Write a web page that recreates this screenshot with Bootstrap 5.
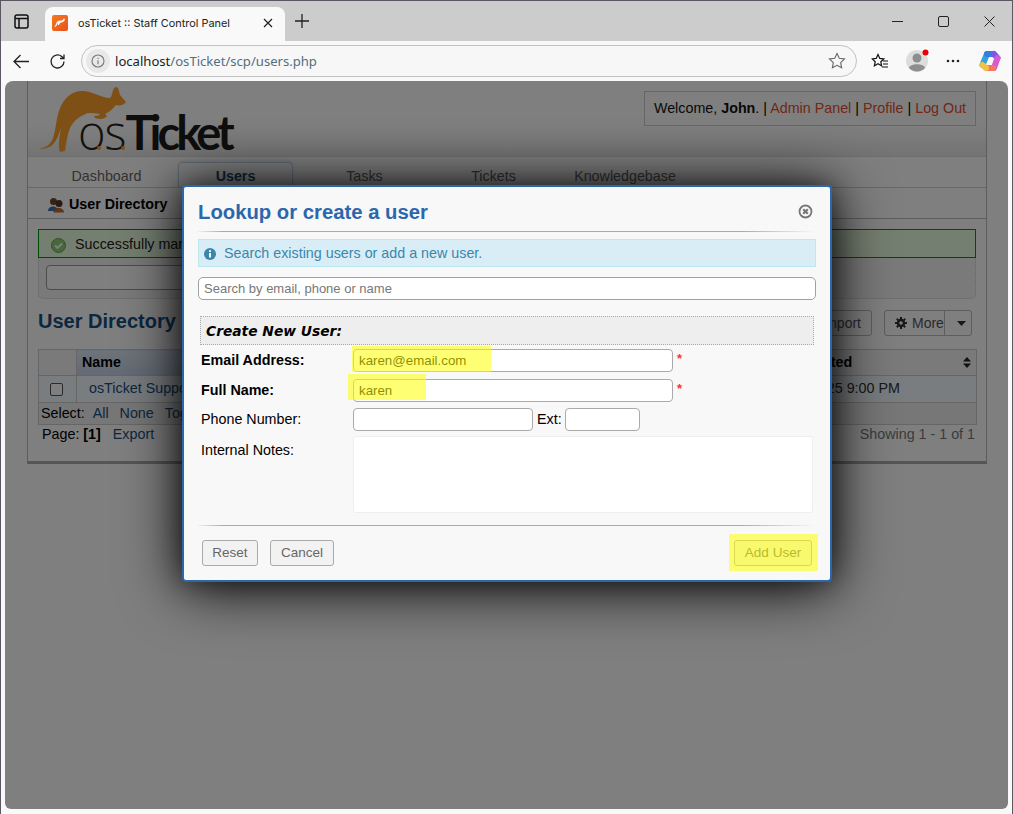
<!DOCTYPE html>
<html lang="en">
<head>
<meta charset="utf-8">
<title>osTicket :: Staff Control Panel</title>
<link href="https://cdn.jsdelivr.net/npm/bootstrap@5.3.0/dist/css/bootstrap.min.css" rel="stylesheet">
<script src="https://cdn.jsdelivr.net/npm/bootstrap@5.3.0/dist/js/bootstrap.bundle.min.js"></script>
<style>
html,body{height:814px;overflow:hidden;margin:0;background:#f9f9f9;font-family:"Liberation Sans",Arial,sans-serif;font-size:14.3px;color:#000}
.win{width:1013px;height:814px;border:1px solid #5d5560;border-width:1px 1px 0 1px;background:#f9f9f9;display:flex;flex-direction:column}
.tabstrip{height:40px;background:#ccc;flex:none;padding-left:44px;position:relative}
.brtab{width:240px;height:34px;margin-top:6px;background:#f9f9f9;border-radius:8px 8px 0 0;padding:0 12px 2px 7px;gap:10px;color:#222}
.favi{width:16px;height:16px;background:linear-gradient(135deg,#f47a20,#e9501c);border-radius:2px;flex:none}
.brtab .ttl{flex:1;white-space:nowrap;font-family:"Inter","Noto Sans",sans-serif;font-size:10.9px}
.sideic{position:absolute;left:13px;top:13px}
.plus{margin-left:3px;margin-top:6px}
.winbtns{position:absolute;right:0;top:0;height:40px;gap:0}
.winbtns span{width:46px;height:40px;display:flex;align-items:center;justify-content:center}
.toolbar{height:40px;flex:none;background:#f9f9f9;position:relative}
.addr{position:absolute;left:80px;top:4px;width:776px;height:32px;border:1px solid #c2c2c2;border-radius:16px;background:#f7f7f7;font-family:"Noto Sans",sans-serif;font-size:13.1px;color:#52707f;padding-left:4px;gap:5px}
.addr .utxt{padding-top:2px}
.addr b{font-weight:400;color:#1c1c1c}
.addrinfo{width:24px;height:24px;border-radius:50%;background:#e8e8e8;display:flex;align-items:center;justify-content:center;flex:none}
.tbic{position:absolute;top:0;height:40px;display:flex;align-items:center}
.viewport{width:1003px;height:728px;margin-left:4px;background:#fff;border-radius:8px 8px 6px 6px;overflow:hidden;position:relative;flex:none}
.sheet{width:960px;height:383px;margin-left:22px;border-left:1px solid #bbb;border-right:1px solid #bbb;border-bottom:3px solid #aaa;background:#fff}
.headarea{height:76px;background:linear-gradient(#fff 55%,#f8f8f8 72%,#e6e6e6 100%);border-bottom:1px solid #ddd;padding:0 10px}
.logobox{width:210px;height:76px;position:relative}
.roo{position:absolute;left:-1px;top:4px}
.logoword{position:absolute;left:40px;top:23px;line-height:56px;white-space:nowrap;font-family:"Lato","Open Sans",sans-serif;color:#222}
.logoword .lo{font-size:47px;font-weight:300;letter-spacing:-1px;font-family:"Open Sans",sans-serif}
.logoword .hi{font-size:47px;font-weight:700;letter-spacing:-3.9px;color:#1c1c1c}
.ldot{position:absolute;top:65px;width:4px;height:4px;border-radius:50%;background:#ffa02c}
.welc{height:35px;width:332px;margin-top:10px;border:1px solid #ccc;background:#fff;padding:0 8px;color:#111;white-space:nowrap;justify-content:center}
.welc a{color:#e2502f;text-decoration:none}
.welc i{font-style:normal;color:#000}
.navstrip{height:31px;padding-left:14px;border-bottom:1px solid #c0d5ea;background:#fff;align-items:flex-end}
.navit{width:129px;text-align:center;height:25px;line-height:28px;color:#666;flex:none}
.navit.last{width:134px}
.navit.on{width:115px;margin:0 7px;line-height:26px;font-weight:700;color:#184e81;background:#fff;border:1px solid #c0d5ea;border-bottom:0;border-radius:5px 5px 0 0;box-shadow:0 -1px 3px rgba(0,0,0,.1)}
.subnav{height:31px;border-bottom:1px solid #bbb;padding:4px 0 0 20px;font-weight:700;gap:5px;color:#000}
.content{padding:10px 10px 0 10px}
.okbar{height:29px;background:#eaffe2;border:1px solid #090;padding:3px 0 0 12px;gap:9px;color:#222;white-space:nowrap}
.searchwrap{height:41px;background:#f4f4f4;border:1px dotted #ccc;border-top:0;border-radius:0 0 5px 5px;padding:7px 7px}
.searchwrap input{width:300px;height:25px;border:1px solid #999;border-radius:4px;background:#fff;display:block}
.dirhead{height:50px;padding-top:11px}
.dirhead h2{margin:0;font:700 20px "Liberation Sans",sans-serif;color:#184e81}
.pbtn{height:26px;border:1px solid #bbb;border-radius:3px;background:#fff;color:#555;font-size:14px;display:flex;align-items:center;padding:0 10px;gap:5px}
.dirtools{margin-right:4px;gap:12px}
.morebtn{padding:0;width:88px}
.morebtn .lft{flex:1;display:flex;align-items:center;gap:5px;padding-left:10px;height:100%;border-right:1px solid #bbb}
.morebtn .rgt{width:23px;flex:none;display:flex;justify-content:center}
.ulist{width:939px;border-collapse:collapse;table-layout:fixed;margin:0}
.ulist th,.ulist td{border:1px solid #ccc;padding:0 5px;font-weight:400}
.ulist thead th{height:26px;background:#f4f4f4;font-weight:700;color:#000}
.ulist thead th.sorted{background:linear-gradient(#dfe7f4,#c7d6ec)}
.ulist tbody td{height:27px;background:#f4fafe;color:#333}
.ulist tbody td a{color:#184e81;text-decoration:none;margin-left:7px}
.ulist tfoot td{height:22px;background:#eee;padding:0 2px;color:#000}
.ulist tfoot a{color:#184e81;text-decoration:none;margin-left:4px;margin-right:3px}
.cbx{width:13px;height:13px;border:1px solid #555;border-radius:2px;background:#fff;display:block;margin:0 0 0 6px}
.pagerow{height:20px;padding:0 1px 0 4px;color:#000}
.pagerow a{color:#184e81;text-decoration:none;margin-left:12px}
.pagerow .shw{color:#777}
.dim{position:absolute;inset:0;background:rgba(0,0,0,.5)}
.dlg{position:absolute;left:177px;top:104px;width:650px;height:397px;background:#f8f8f8;border:2px solid #2a67ac;border-radius:4px;box-shadow:0 5px 60px #000,0 0 25px rgba(0,0,0,.4);padding:1px 15px 0 14px;color:#000}
.dlg h3{margin:0;font:700 20.3px/24px "Liberation Sans",sans-serif;color:#2a67ac}
.dlghead{height:43px;padding-top:12px;justify-content:space-between}
.xic{margin:4px 2px 0 0}
.rule{height:1px;background:linear-gradient(to right,rgba(170,170,170,.1),#aaa 4%,#aaa 88%,rgba(170,170,170,0))}
.infobar{height:28px;margin-top:7px;background:#d9edf7;border:1px solid #bce8f1;color:#3a87ad;padding:2px 0 0 5px;gap:8px;width:618px}
.lookup{width:618px;height:23px;margin-top:10px;border:1px solid #a0a0a0;border-radius:5px;background:#fff;padding:0 5px;font:13px "Liberation Sans",sans-serif;display:block}
.lookup::placeholder{color:#777;opacity:1}
.newhead{width:614px;height:29px;margin:16px 0 0 2px;background:#eee;border:1px dotted #aaa;padding-left:5px;font:italic 700 13.8px "DejaVu Sans",sans-serif;color:#000}
.frow{margin-left:3px;position:relative;display:flex;align-items:flex-start}
.frow label{width:152px;flex:none;margin:0;line-height:22px}
.fin{height:23px;border:1px solid #aaa;border-radius:4px;background:#fff;padding:0 5px;font:13.3px "Liberation Sans",sans-serif;color:#000;outline:0;display:block}
.fin.w3{width:320px}.fin.w1{width:180px}.fin.w0{width:75px}
.req{color:#f33;font-size:13px;margin-left:4px;line-height:20px;font-weight:700}
.extl{margin:0 3px 0 4px;line-height:22px}
.yel{position:absolute;background:rgba(255,255,0,.55);pointer-events:none}
.notes{width:460px;height:77px;border:1px solid #eee;border-radius:3px;background:#fff;display:block}
.dbtn{height:26px;border:1px solid #aaa;border-radius:3px;background:#f2f2f2;color:#666;font-size:13.5px;line-height:24px;display:inline-block;text-align:center}
.dbtn.b1{width:56px}.dbtn.b2{width:64px;margin-left:12px}.dbtn.b3{width:78px}
.dfoot{margin:14px 3px 0 4px;position:relative}
</style>
</head>
<body>
<div class="win">
  <div class="tabstrip d-flex align-items-start">
    <svg class="sideic" width="15" height="15" viewBox="0 0 15 15" fill="none" stroke="#111" stroke-width="1.5"><rect x="1" y="1" width="13" height="13" rx="2"/><path d="M1 4.500h13M5 4.500V14"/></svg>
    <div class="brtab d-flex align-items-center">
      <span class="favi d-flex align-items-center justify-content-center"><svg width="12" height="10" viewBox="0 0 12 10" fill="#fff"><path d="M0 9C2 8 2 4 4 3S8 3 9 2l1-2 1 2-2 2-3 1-1 2-1 0 0-2C3 6 3 9 0 9z"/></svg></span>
      <span class="ttl">osTicket :: Staff Control Panel</span>
      <svg width="10" height="10" viewBox="0 0 10 10" stroke="#222" stroke-width="1.2"><path d="M1 1l8 8M9 1l-8 8"/></svg>
    </div>
    <svg class="plus" width="28" height="28" viewBox="0 0 28 28" stroke="#222" stroke-width="1.3"><path d="M14 7v14M7 14h14"/></svg>
    <div class="winbtns d-flex">
      <span><svg width="11" height="11" viewBox="0 0 11 11" stroke="#222" stroke-width="1"><path d="M0 5.500h11"/></svg></span>
      <span><svg width="11" height="11" viewBox="0 0 11 11" fill="none" stroke="#222" stroke-width="1"><rect x=".5" y=".5" width="10" height="10" rx="1.500"/></svg></span>
      <span><svg width="11" height="11" viewBox="0 0 11 11" stroke="#222" stroke-width="1"><path d="M.5.5l10 10M10.500.5l-10 10"/></svg></span>
    </div>
  </div>
  <div class="toolbar">
    <span class="tbic" style="left:12px"><svg width="17" height="15" viewBox="0 0 17 15" fill="none" stroke="#222" stroke-width="1.3"><path d="M16 7.500H1M7.500 1L1 7.500 7.500 14"/></svg></span>
    <span class="tbic" style="left:48px"><svg width="17" height="17" viewBox="0 0 17 17" fill="none" stroke="#222" stroke-width="1.3"><path d="M15 8.500A6.500 6.500 0 1 1 12.700 3.500L15 5.500M15 1.500v4h-4"/></svg></span>
    <div class="addr d-flex align-items-center">
      <span class="addrinfo"><svg width="14" height="14" viewBox="0 0 14 14" fill="none" stroke="#777" stroke-width="1.100"><circle cx="7" cy="7" r="6"/><path d="M7 6.200v4M7 3.800v1.200"/></svg></span>
      <span class="utxt"><b>localhost</b>/osTicket/scp/users.php</span>
    </div>
    <span class="tbic" style="left:827px"><svg width="18" height="18" viewBox="0 0 18 18" fill="none" stroke="#666" stroke-width="1.100"><path d="M9 1.500l2.300 4.800 5.200.7-3.800 3.600.9 5.200L9 13.300l-4.600 2.500.9-5.200L1.500 7l5.200-.7z"/></svg></span>
    <span class="tbic" style="left:870px"><svg width="18" height="17" viewBox="0 0 18 17" fill="none" stroke="#111" stroke-width="1.200"><path d="M7 1.500l1.800 3.900 4 .5-3 2.800.8 4.200L7 10.800 3.400 12.900l.8-4.200-3-2.800 4-.5zM12 8h5M12 11h5M11 14h6"/></svg></span>
    <span class="tbic" style="left:904px"><svg width="24" height="24" viewBox="0 0 24 24"><circle cx="12" cy="12" r="11" fill="#ddd"/><circle cx="12" cy="9" r="4.500" fill="#8e8e8e"/><path d="M4 19c1-5 15-5 16 0a11 11 0 0 1-16 0z" fill="#8e8e8e"/><circle cx="20.500" cy="3.500" r="3" fill="#e60000"/></svg></span>
    <span class="tbic" style="left:945px"><svg width="14" height="4" viewBox="0 0 14 4" fill="#222"><circle cx="2" cy="2" r="1.300"/><circle cx="7" cy="2" r="1.300"/><circle cx="12" cy="2" r="1.300"/></svg></span>
    <span class="tbic" style="left:978px"><svg width="22" height="22" viewBox="0 0 22 22" fill="none" stroke-width="6" stroke-linecap="round"><path d="M8 4L3.500 15" stroke="#2ea6d8"/><path d="M8 4h6" stroke="#3a7be0"/><path d="M15 4L18.500 8" stroke="#7a58e8"/><path d="M18.500 8L15 18" stroke="#d85ad0"/><path d="M14 18H8" stroke="#f27a5a"/><path d="M3.500 15L7 18" stroke="#f2c14a"/></svg></span>
  </div>
  <div class="viewport">
    <div class="sheet">
      <div class="headarea d-flex justify-content-between">
        <div class="logobox">
          <svg class="roo" width="95" height="70" viewBox="37 85 95 70"><path fill="#ffa02c" d="M37 148C44 149 50 146 53 138 56 130 56 118 60 108 64 98 72 91 82 91 92 91 102 98 110 98 113 96 112 87 116 87 119 87 119 92 120 95L126 102C124 105 120 106 116 105 113 108 110 112 105 114L107 116C105 119 100 120 95 118L94 116C98 116 100 115 100 114 96 113 92 113 88 113 80 116 74 120 70 128 67 136 66 144 65 151L60 152C58 148 59 138 61 128 58 136 55 152 37 148Z"/></svg>
          <div class="logoword"><span class="lo">os</span><span class="hi">Ticket</span></div>
          <span class="ldot" style="left:59px"></span><span class="ldot" style="left:83px"></span>
        </div>
        <div class="welc d-flex align-items-center"><span>Welcome, <strong>John</strong>. <i>|</i> <a href="#">Admin Panel</a> <i>|</i> <a href="#">Profile</a> <i>|</i> <a href="#">Log Out</a></span></div>
      </div>
      <div class="navstrip d-flex">
        <div class="navit">Dashboard</div><div class="navit on">Users</div><div class="navit">Tasks</div><div class="navit">Tickets</div><div class="navit last">Knowledgebase</div>
      </div>
      <div class="subnav d-flex align-items-center">
        <svg width="16" height="16" viewBox="0 0 16 16"><circle cx="5.500" cy="4.500" r="3.500" fill="#6b4a2f"/><path d="M0 14c0-6 10-6 10 0z" fill="#3f6fb0"/><circle cx="11" cy="6.500" r="3.500" fill="#55382a"/><path d="M5.500 15.500c0-6 10.500-6 10.500 0z" fill="#c06a30"/></svg>
        <span>User Directory</span>
      </div>
      <div class="content">
        <div class="okbar d-flex align-items-center">
          <svg width="15" height="15" viewBox="0 0 15 15"><circle cx="7.500" cy="7.500" r="7" fill="#8ed07a" stroke="#5da84a"/><path d="M4 7.500l2.500 2.500L11 5.500" fill="none" stroke="#fff" stroke-width="1.800"/></svg>
          <span>Successfully marked user as verified</span>
        </div>
        <div class="searchwrap"><input type="text" aria-label="Search"></div>
        <div class="dirhead d-flex justify-content-between">
          <h2>User Directory</h2>
          <div class="dirtools d-flex">
            <div class="pbtn">Import</div>
            <div class="pbtn morebtn"><span class="lft"><svg width="12" height="12" viewBox="0 0 12 12" fill="none" stroke="#333"><circle cx="6" cy="6" r="3" stroke-width="2.500"/><path d="M6 0v2M6 10v2M0 6h2M10 6h2M1.800 1.800l1.400 1.400M8.800 8.800l1.400 1.400M1.800 10.200l1.400-1.400M8.800 3.200l1.400-1.400" stroke-width="2"/></svg>More</span><span class="rgt"><svg width="9" height="5" viewBox="0 0 9 5" fill="#333"><path d="M0 0h9L4.500 5z"/></svg></span></div>
          </div>
        </div>
        <table class="ulist">
          <colgroup><col style="width:38px"><col style="width:360px"><col style="width:150px"><col style="width:203px"><col></colgroup>
          <thead><tr><th></th><th class="sorted">Name</th><th>Status</th><th>Created</th><th><div class="d-flex justify-content-between align-items-center"><span>Updated</span><svg width="8" height="11" viewBox="0 0 8 11" fill="#222"><path d="M4 0l4 4.500H0zM4 11L0 6.500h8z"/></svg></div></th></tr></thead>
          <tbody><tr><td><span class="cbx"></span></td><td><a href="#">osTicket Support</a></td><td>Active</td><td>3/25/25 9:00 PM</td><td>3/25/25 9:00 PM</td></tr></tbody>
          <tfoot><tr><td colspan="5">Select: <a href="#">All</a> <a href="#">None</a> <a href="#">Toggle</a></td></tr></tfoot>
        </table>
        <div class="pagerow d-flex justify-content-between align-items-end">
          <span>Page: <strong>[1]</strong><a href="#">Export</a></span>
          <span class="shw">Showing 1 - 1 of 1</span>
        </div>
      </div>
    </div>
    <div class="dim"></div>
    <div class="dlg">
      <div class="dlghead d-flex align-items-start">
        <h3>Lookup or create a user</h3>
        <svg class="xic" width="15" height="15" viewBox="0 0 15 15"><circle cx="7.500" cy="7.500" r="6" fill="none" stroke="#777" stroke-width="1.800"/><path d="M5.200 5.200l4.600 4.600M9.800 5.200l-4.600 4.600" stroke="#777" stroke-width="2.200"/></svg>
      </div>
      <div class="rule"></div>
      <div class="infobar d-flex align-items-center">
        <svg width="12" height="12" viewBox="0 0 12 12"><circle cx="6" cy="6" r="6" fill="#3a87ad"/><path d="M6 5v4.500M6 2.300v1.600" stroke="#fff" stroke-width="2"/></svg>
        <span>Search existing users or add a new user.</span>
      </div>
      <input class="lookup" type="text" placeholder="Search by email, phone or name">
      <div class="newhead d-flex align-items-center">Create New User:</div>
      <div class="frow mt-1"><label class="fw-bold">Email Address:</label><input class="fin w3" value="karen@email.com"><span class="req">*</span><span class="yel" style="left:151px;top:-3px;width:139px;height:26px"></span></div>
      <div class="frow" style="margin-top:7px"><label class="fw-bold">Full Name:</label><input class="fin w3" value="karen"><span class="req">*</span><span class="yel" style="left:147px;top:-5px;width:78px;height:26px"></span></div>
      <div class="frow" style="margin-top:6px"><label>Phone Number:</label><input class="fin w1"><span class="extl">Ext:</span><input class="fin w0"></div>
      <div class="frow" style="margin-top:5px"><label class="pt-1">Internal Notes:</label><div class="notes"></div></div>
      <div class="rule" style="margin-top:12px"></div>
      <div class="dfoot d-flex justify-content-between">
        <div class="d-flex"><span class="dbtn b1">Reset</span><span class="dbtn b2">Cancel</span></div>
        <span class="dbtn b3">Add User</span>
        <span class="yel" style="right:-6px;top:-6px;width:89px;height:37px"></span>
      </div>
    </div>
  </div>
</div>
</body>
</html>
